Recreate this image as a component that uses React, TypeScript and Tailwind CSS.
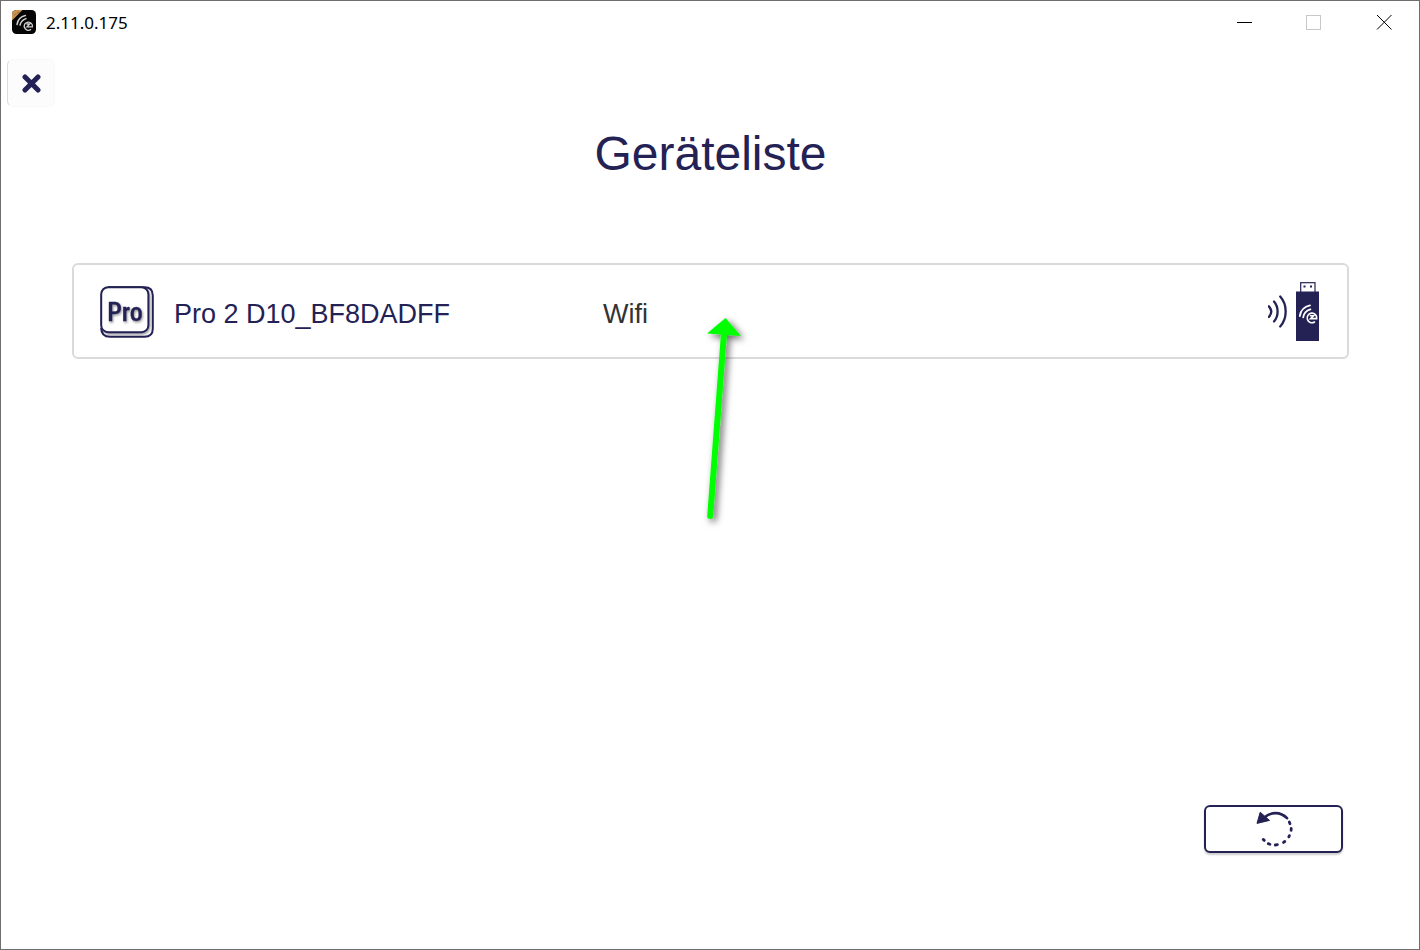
import type { ReactNode } from "react";

function AppLogo() {
  return (
    <svg className="size-6 shrink-0" viewBox="0 0 24 24" fill="none" aria-hidden="true">
      <defs>
        <clipPath id="logo-clip">
          <rect width="24" height="24" rx="4.5" />
        </clipPath>
      </defs>
      <g clipPath="url(#logo-clip)">
        <rect width="24" height="24" fill="#050505" />
        <path d="M0 0H10.500L0 10.500Z" fill="#c99550" />
        <path d="M2 5.500l2-2M5 3l2.500-1" stroke="#8d6532" strokeWidth="1" />
      </g>
      <g stroke="#d0d0d0" strokeWidth="1.500" strokeLinecap="round">
        <path d="M5 14.500C5.800 9.800 8.800 6.600 13.400 5.600" />
        <path d="M8 15C8.800 12 10.800 9.700 14 8.600" />
        <path d="M15 14H17.800L15 16.800H20.400A4.100 4.100 0 1 0 18.600 19.600" strokeWidth="1.300" />
      </g>
    </svg>
  );
}

function ProIcon() {
  return (
    <svg className="h-[52px] w-[54px]" viewBox="0 0 54 52" fill="none" aria-label="Pro">
      <defs>
        <filter id="pro-shadow" x="-20%" y="-20%" width="150%" height="150%">
          <feDropShadow dx="1" dy="1.5" stdDeviation="1.200" floodColor="#000" floodOpacity="0.4" />
        </filter>
      </defs>
      <path
        d="M8 1.200H44.500Q52.800 1.200 52.800 9.500V42.500Q52.800 50.800 44.500 50.800H10Q1.200 50.800 1.200 42"
        stroke="#242255"
        strokeWidth="2"
      />
      <rect
        x="1.200"
        y="1.200"
        width="47.200"
        height="45"
        rx="7"
        fill="#fff"
        stroke="#242255"
        strokeWidth="2"
        filter="url(#pro-shadow)"
      />
      <text
        x="25"
        y="34.500"
        textAnchor="middle"
        fill="#242255"
        stroke="#242255"
        strokeWidth="0.300"
        filter="url(#pro-shadow)"
        className="font-['Roboto_Condensed','Liberation_Sans_Narrow','Liberation_Sans',sans-serif] text-[26px] font-medium"
      >
        Pro
      </text>
    </svg>
  );
}

function DongleIcon() {
  return (
    <svg className="h-[60px] w-[52px]" viewBox="0 0 52 60" fill="none" aria-label="Wifi-Dongle">
      <g stroke="#242255" strokeWidth="2.300" strokeLinecap="round">
        <path d="M0.800 24.300Q5.800 29.500 0.800 35" />
        <path d="M6 19.500C10.800 25 10.800 34 6 39.500" />
        <path d="M12.200 14.500C19.500 22.500 19.500 36.500 12.200 44.500" />
      </g>
      <rect x="32.700" y="0.700" width="14.300" height="10" fill="#fff" stroke="#242255" strokeWidth="1.200" />
      <path d="M35.500 3.500h2v2h-2zM42 3.500h2v2h-2z" fill="#242255" />
      <rect x="28" y="9.500" width="23" height="49.500" fill="#242255" />
      <g stroke="#fff" strokeWidth="1.800" strokeLinecap="round">
        <path d="M31.800 34C32.600 28.800 36.400 24.600 42 23.400" />
        <path d="M35.200 35.400C35.700 31.500 38.400 28.400 42.400 27.300" />
        <path d="M42.500 33.700H45.500L42.600 36.600H48.700A4.800 4.800 0 1 0 46.500 40" strokeWidth="1.600" />
      </g>
    </svg>
  );
}

function ReloadIcon() {
  return (
    <svg className="h-9 w-[38px]" viewBox="0 0 38 36" fill="none" aria-hidden="true">
      <path d="M8 7.200C14 0.600 24.500 0.200 31 7.200" stroke="#242255" strokeWidth="2.600" strokeLinecap="round" />
      <path d="M4.200 1.200L13.500 9.400L1 12.400Z" fill="#242255" stroke="#242255" strokeWidth="1" strokeLinejoin="round" />
      <g stroke="#242255" strokeWidth="2.800" strokeLinecap="round">
        <path d="M33.300 11L34 12.800" />
        <path d="M35.200 17.500L35.100 19.400" />
        <path d="M33.400 24.600L32.800 25.900" />
        <path d="M28.800 30.500L27.500 31.400" />
        <path d="M21.400 33.700L19.300 34" />
        <path d="M13.900 33.200L12.200 32.600" />
        <path d="M8.300 29.400L7.200 28.400" />
      </g>
    </svg>
  );
}

function PointerArrow() {
  return (
    <svg
      className="pointer-events-none absolute top-[37px] left-1/2 -ml-[21px] h-60 w-20"
      viewBox="0 0 80 240"
      aria-hidden="true"
    >
      <defs>
        <filter id="arrow-shadow" x="-50%" y="-10%" width="220%" height="125%">
          <feDropShadow dx="3" dy="3" stdDeviation="3.500" floodColor="#000" floodOpacity="0.6" />
        </filter>
      </defs>
      <g filter="url(#arrow-shadow)" fill="#00ff00">
        <path d="M20.200 216L34 33" stroke="#00ff00" strokeWidth="6" strokeLinecap="round" />
        <path d="M35.500 18L17 33.500L51 36Z" />
      </g>
    </svg>
  );
}

function WindowButton({ label, disabled, children }: { label: string; disabled?: boolean; children: ReactNode }) {
  return (
    <button
      type="button"
      aria-label={label}
      disabled={disabled}
      className="flex h-[42px] w-[70px] items-center justify-center"
    >
      <svg className="size-4" viewBox="0 0 16 16" fill="none" aria-hidden="true">
        {children}
      </svg>
    </button>
  );
}

function TitleBar() {
  return (
    <header className="flex h-[42px] items-center justify-between pl-[11px]">
      <div className="flex items-center gap-[10px]">
        <AppLogo />
        <span className="pt-[2px] font-['Segoe_UI','Noto_Sans',sans-serif] text-[17px] leading-6 text-black">
          2.11.0.175
        </span>
      </div>
      <div className="flex">
        <WindowButton label="Minimieren">
          <path d="M1 8.500H16" stroke="#000" />
        </WindowButton>
        <WindowButton label="Maximieren" disabled>
          <rect x="0.500" y="1.500" width="14" height="14" stroke="#c8c8c8" />
        </WindowButton>
        <WindowButton label="Schließen">
          <path d="M1 1L15.500 15.500M15.500 1L1 15.500" stroke="#000" />
        </WindowButton>
      </div>
    </header>
  );
}

export default function App() {
  return (
    <div className="flex min-h-screen flex-col border border-[#6e6e6e] bg-white font-['Liberation_Sans',Arial,sans-serif] text-[#242255]">
      <TitleBar />
      <main className="flex flex-1 flex-col">
        <button
          type="button"
          aria-label="Liste schließen"
          className="mt-4 ml-[6px] flex size-12 items-center justify-center rounded-md border border-[#f9f9f9] border-l-[#dcdcdc] bg-[#fcfcfc]"
        >
          <svg className="size-5" viewBox="0 0 20 20" fill="none" aria-hidden="true">
            <path
              d="M4 4L17 17M17 4L4 17"
              stroke="#242255"
              strokeWidth="5"
              strokeLinecap="round"
            />
          </svg>
        </button>
        <h1 className="mt-[19px] pl-px text-center text-5xl leading-[56px]">Geräteliste</h1>
        <section className="relative mr-[70px] ml-[71px] mt-[81px]">
          <ul>
            <li>
              <button
                type="button"
                className="grid h-24 w-full grid-cols-[54px_409px_1fr_auto] items-center gap-5 rounded-md border-2 border-[#dadada] pt-[2px] pr-[27px] pl-[26px] text-left text-[27px] leading-8"
              >
                <ProIcon />
                <span className="pt-1">Pro 2 D10_BF8DADFF</span>
                <span className="pt-1 text-[#333333]">Wifi</span>
                <DongleIcon />
              </button>
            </li>
          </ul>
          <PointerArrow />
        </section>
        <footer className="mt-auto flex justify-end pr-[76px] pb-24">
          <button
            type="button"
            aria-label="Liste aktualisieren"
            className="flex h-12 w-[139px] items-center justify-center rounded-md border-2 border-[#242255] bg-white pl-[2px] shadow-[0_2px_2px_rgba(0,0,0,0.2)]"
          >
            <ReloadIcon />
          </button>
        </footer>
      </main>
    </div>
  );
}
